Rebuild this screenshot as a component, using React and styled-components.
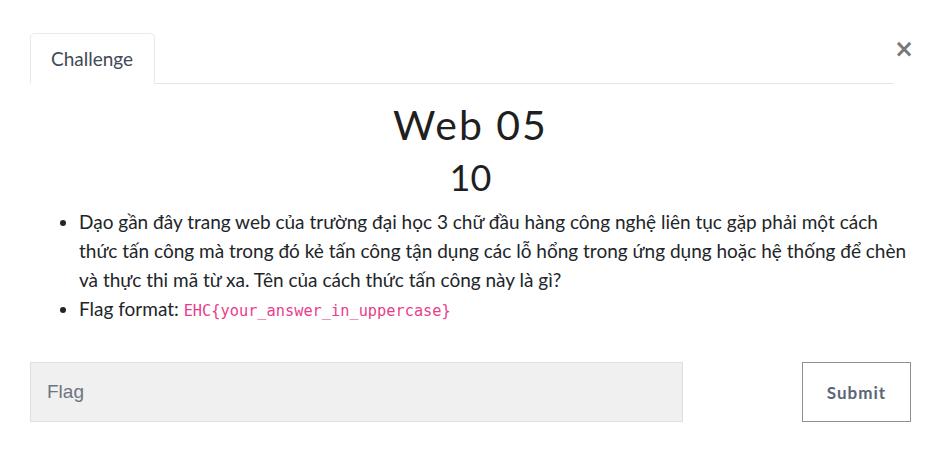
import React from 'react'
import styled, { createGlobalStyle } from 'styled-components'

const GlobalStyle = createGlobalStyle`
  body {
    margin: 0;
    background: #fff;
    font-family: Lato, "Noto Sans", sans-serif;
    color: #212529;
  }
`

const Modal = styled.div`
  width: 940px;
  height: 469px;
  box-sizing: border-box;
  padding: 33px 29px 0 30px;
`

const Header = styled.div`
  display: flex;
  align-items: flex-start;
`

const Tabs = styled.div`
  flex: 1;
  display: flex;
  border-bottom: 1px solid #e4e7ea;
`

const Tab = styled.div`
  padding: 0 21px 0 20px;
  height: 49px;
  line-height: 50px;
  margin-bottom: -1px;
  font-size: 19px;
  color: #3f4a56;
  background: #fff;
  border: 1px solid #e7e9ec;
  border-bottom-color: #fff;
  border-radius: 5px 5px 0 0;
`

const Close = styled.button`
  width: 17px;
  padding: 0;
  margin-top: 4px;
  background: none;
  border: 0;
  font-family: "DejaVu Sans", sans-serif;
  font-size: 24px;
  line-height: 24px;
  font-weight: bold;
  color: #777;
  text-align: right;
`

const Title = styled.h1`
  margin: 16px 0 0;
  text-align: center;
  font-weight: 400;
  font-size: 41px;
  line-height: 50px;
  letter-spacing: 2px;
  color: #1f1f1f;
`

const Points = styled.h2`
  margin: 5px 0 0;
  text-align: center;
  font-weight: 400;
  font-size: 36px;
  line-height: 44px;
  color: #1f1f1f;
`

const List = styled.ul`
  margin: 8px 0 0;
  padding-left: 49px;
  font-size: 19px;
  line-height: 29px;
  color: #212529;
`

const Code = styled.code`
  font-family: "DejaVu Sans Mono", "Liberation Mono", monospace;
  font-size: 15.3px;
  color: #e83e8c;
`

const Form = styled.form`
  display: flex;
  justify-content: space-between;
  margin-top: 36px;
`

const FlagInput = styled.input`
  width: 653px;
  height: 60px;
  box-sizing: border-box;
  padding: 0 16px;
  background: #f0f0f0;
  border: 1px solid #dcdfe3;
  font-family: "Liberation Sans", Arial, sans-serif;
  font-size: 19px;
  color: #495057;
  &::placeholder {
    color: #6c757d;
  }
`

const SubmitButton = styled.button`
  width: 109px;
  height: 60px;
  background: #fff;
  border: 1px solid #8f8f8f;
  font-family: Lato, sans-serif;
  font-weight: 700;
  font-size: 17px;
  letter-spacing: 1px;
  color: #5a6673;
`

export default function App() {
  return (
    <Modal>
      <GlobalStyle />
      <Header>
        <Tabs>
          <Tab>Challenge</Tab>
        </Tabs>
        <Close>×</Close>
      </Header>
      <Title>Web 05</Title>
      <Points>10</Points>
      <List>
        <li>
          Dạo gần đây trang web của trường đại học 3 chữ đầu hàng công nghệ liên tục gặp phải một cách
          thức tấn công mà trong đó kẻ tấn công tận dụng các lỗ hổng trong ứng dụng hoặc hệ thống để chèn
          và thực thi mã từ xa. Tên của cách thức tấn công này là gì?
        </li>
        <li>
          Flag format: <Code>EHC{'{'}your_answer_in_uppercase{'}'}</Code>
        </li>
      </List>
      <Form onSubmit={e => e.preventDefault()}>
        <FlagInput placeholder="Flag" />
        <SubmitButton type="submit">Submit</SubmitButton>
      </Form>
    </Modal>
  )
}
